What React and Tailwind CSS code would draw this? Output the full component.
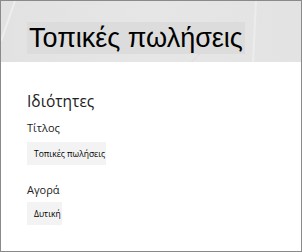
export default function App() {
  return (
    <div className="w-[302px] h-[252px] border border-[#8a8a8a] bg-white flex flex-col overflow-hidden" style={{ fontFamily: '"Liberation Sans", Arial, sans-serif' }}>
      <div className="relative h-[61px] shrink-0 bg-gradient-to-r from-[#e2e2e2] via-[#e6e6e6] to-[#e3e3e3] pl-[26px] pt-[21px]">
        <svg className="absolute inset-0" width="300" height="61" viewBox="0 0 300 61">
          <path d="M0 40 L14 0" stroke="#eeeeee" strokeWidth="2" fill="none" />
          <path d="M190 61 L235 20" stroke="#dcdcdc" strokeWidth="1" fill="none" />
          <path d="M255 0 L252 61" stroke="#ececec" strokeWidth="2" fill="none" />
        </svg>
        <span className="relative inline-block h-[32px] bg-[#dcdcdc] px-[2px] text-[27px] leading-[33px] text-black">Τοπικές πωλήσεις</span>
      </div>
      <div className="flex flex-col pl-[26px] pt-[29px]" style={{ fontFamily: '"Open Sans", "Noto Sans", sans-serif' }}>
        <div className="text-[15.5px] leading-[20px] text-[#222]">Ιδιότητες</div>
        <div className="mt-[9px] text-[11px] leading-[16px] text-[#222]">Τίτλος</div>
        <div className="mt-[6px] self-start h-[23px] bg-[#f3f3f3] pl-[7px] pr-[1px] text-[8.5px] leading-[23px] text-black whitespace-nowrap">Τοπικές πωλήσεις</div>
        <div className="mt-[17px] text-[11px] leading-[16px] text-[#222]">Αγορά</div>
        <div className="mt-[4px] self-start h-[23px] bg-[#f3f3f3] pl-[7px] pr-[1px] text-[8.5px] leading-[23px] text-black">Δυτική</div>
      </div>
    </div>
  );
}
